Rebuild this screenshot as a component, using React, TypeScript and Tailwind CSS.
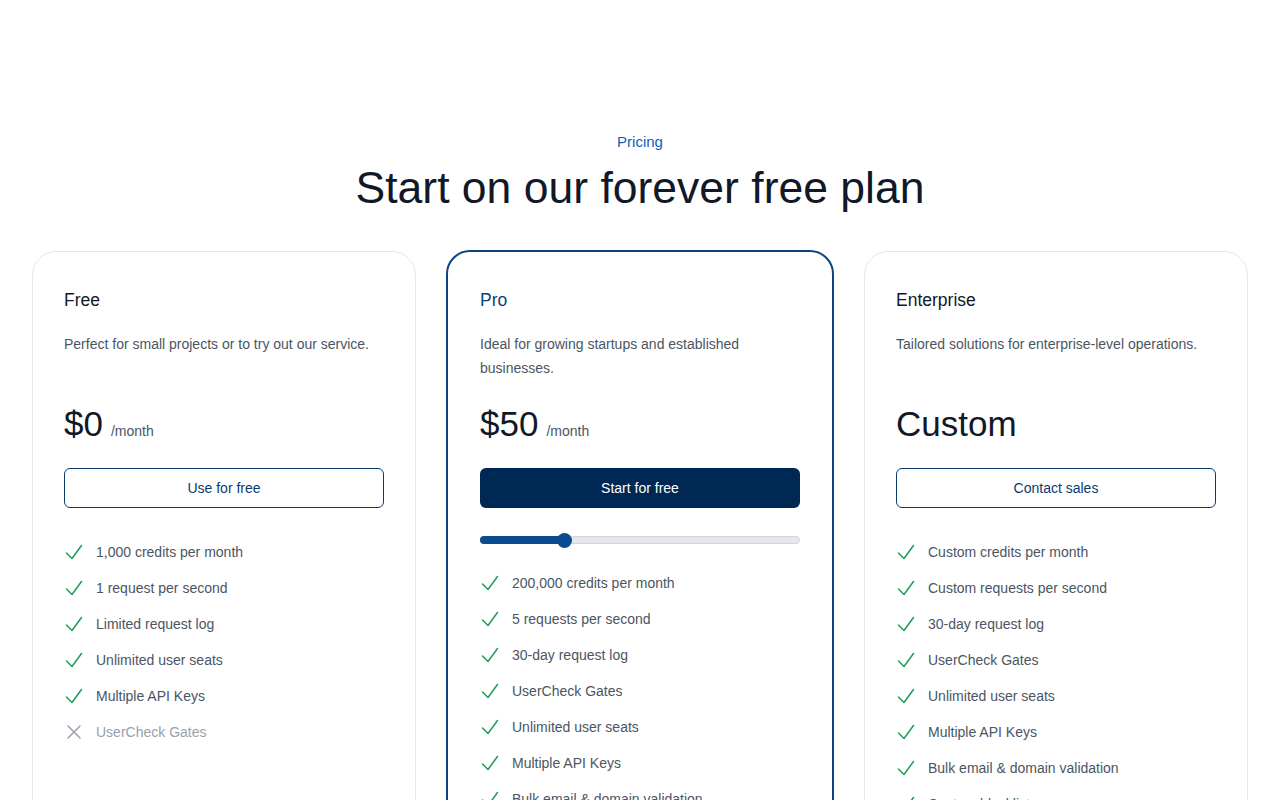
import React from "react";

const NAVY = "#002855";

function CheckIcon() {
  return (
    <svg width="20" height="24" viewBox="0 0 20 24" fill="none" className="flex-none text-[#1f9d55]">
      <path d="M2.5 13 L8 18.5 L17.5 5.5" stroke="currentColor" strokeWidth="1.5" strokeLinecap="round" strokeLinejoin="round" />
    </svg>
  );
}

function XIcon() {
  return (
    <svg width="20" height="24" viewBox="0 0 20 24" fill="none" className="flex-none text-gray-400">
      <path d="M4 6 L16 18 M16 6 L4 18" stroke="currentColor" strokeWidth="1.5" strokeLinecap="round" />
    </svg>
  );
}

type Feature = { text: string; ok: boolean };

function FeatureList({ items }: { items: Feature[] }) {
  return (
    <ul className="flex flex-col gap-3">
      {items.map((f) => (
        <li key={f.text} className="flex items-center gap-3 text-sm leading-6">
          {f.ok ? <CheckIcon /> : <XIcon />}
          <span className={f.ok ? "text-[#4b5563]" : "text-gray-400"}>{f.text}</span>
        </li>
      ))}
    </ul>
  );
}

export default function App() {
  const free: Feature[] = [
    { text: "1,000 credits per month", ok: true },
    { text: "1 request per second", ok: true },
    { text: "Limited request log", ok: true },
    { text: "Unlimited user seats", ok: true },
    { text: "Multiple API Keys", ok: true },
    { text: "UserCheck Gates", ok: false },
  ];
  const pro: Feature[] = [
    { text: "200,000 credits per month", ok: true },
    { text: "5 requests per second", ok: true },
    { text: "30-day request log", ok: true },
    { text: "UserCheck Gates", ok: true },
    { text: "Unlimited user seats", ok: true },
    { text: "Multiple API Keys", ok: true },
    { text: "Bulk email & domain validation", ok: true },
    { text: "Custom blocklists", ok: true },
  ];
  const ent: Feature[] = [
    { text: "Custom credits per month", ok: true },
    { text: "Custom requests per second", ok: true },
    { text: "30-day request log", ok: true },
    { text: "UserCheck Gates", ok: true },
    { text: "Unlimited user seats", ok: true },
    { text: "Multiple API Keys", ok: true },
    { text: "Bulk email & domain validation", ok: true },
    { text: "Custom blocklists", ok: true },
    { text: "Priority support", ok: true },
  ];

  return (
    <div className="min-h-screen bg-white font-['Liberation_Sans',Arial,sans-serif] text-gray-900">
      <div className="px-8 pt-[130px] pb-24">
        <div className="text-center">
          <p className="text-[15px] leading-6 text-[#0b62b8]">Pricing</p>
          <h2 className="mt-[10px] text-[44.5px] leading-[48px] text-[#111827]">
            Start on our forever free plan
          </h2>
        </div>

        <div className="mt-[39px] grid grid-cols-3 gap-8">
          {/* Free */}
          <div className="rounded-3xl border border-gray-200 px-[31px] py-8">
            <h3 className="text-[17.5px] leading-8 text-[#111827]">Free</h3>
            <p className="mt-4 min-h-12 text-sm leading-6 text-[#4b5563]">
              Perfect for small projects or to try out our service.
            </p>
            <p className="mt-6 flex items-baseline gap-2">
              <span className="text-[35px] leading-10 text-[#111827]">$0</span>
              <span className="text-sm text-[#4b5563]">/month</span>
            </p>
            <button className="mt-6 block h-10 w-full rounded-md border border-[#0a3a70] text-sm text-[#0a3a70]">
              Use for free
            </button>
            <div className="mt-8">
              <FeatureList items={free} />
            </div>
          </div>

          {/* Pro */}
          <div className="-mx-0.5 -mt-px rounded-3xl border-2 border-[#0b4384] px-8 pt-8 pb-8">
            <h3 className="text-[17.5px] leading-8 text-[#0b3f7a]">Pro</h3>
            <p className="mt-4 min-h-12 text-sm leading-6 text-[#4b5563]">
              Ideal for growing startups and established businesses.
            </p>
            <p className="mt-6 flex items-baseline gap-2">
              <span className="text-[35px] leading-10 text-[#111827]">$50</span>
              <span className="text-sm text-[#4b5563]">/month</span>
            </p>
            <button className="mt-6 block h-10 w-full rounded-md text-sm text-white" style={{ backgroundColor: NAVY }}>
              Start for free
            </button>
            <div className="relative mt-6 flex h-4 items-center">
              <div className="relative h-2 w-full rounded-full border border-gray-300 bg-gray-200">
                <div className="absolute -left-px -top-px h-2 w-[calc(26.4%+1px)] rounded-full bg-[#0a4a8f]" />
              </div>
              <div className="absolute left-[calc(26.4%-7.5px)] top-[0.5px] h-[15px] w-[15px] rounded-full bg-[#0a4a8f]" />
            </div>
            <div className="mt-[23px]">
              <FeatureList items={pro} />
            </div>
          </div>

          {/* Enterprise */}
          <div className="rounded-3xl border border-gray-200 px-[31px] py-8">
            <h3 className="text-[17.5px] leading-8 text-[#111827]">Enterprise</h3>
            <p className="mt-4 min-h-12 text-sm leading-6 text-[#4b5563]">
              Tailored solutions for enterprise-level operations.
            </p>
            <p className="mt-6 flex items-baseline gap-1">
              <span className="text-[35px] leading-10 text-[#111827]">Custom</span>
            </p>
            <button className="mt-6 block h-10 w-full rounded-md border border-[#0a3a70] text-sm text-[#0a3a70]">
              Contact sales
            </button>
            <div className="mt-8">
              <FeatureList items={ent} />
            </div>
          </div>
        </div>
      </div>
    </div>
  );
}
